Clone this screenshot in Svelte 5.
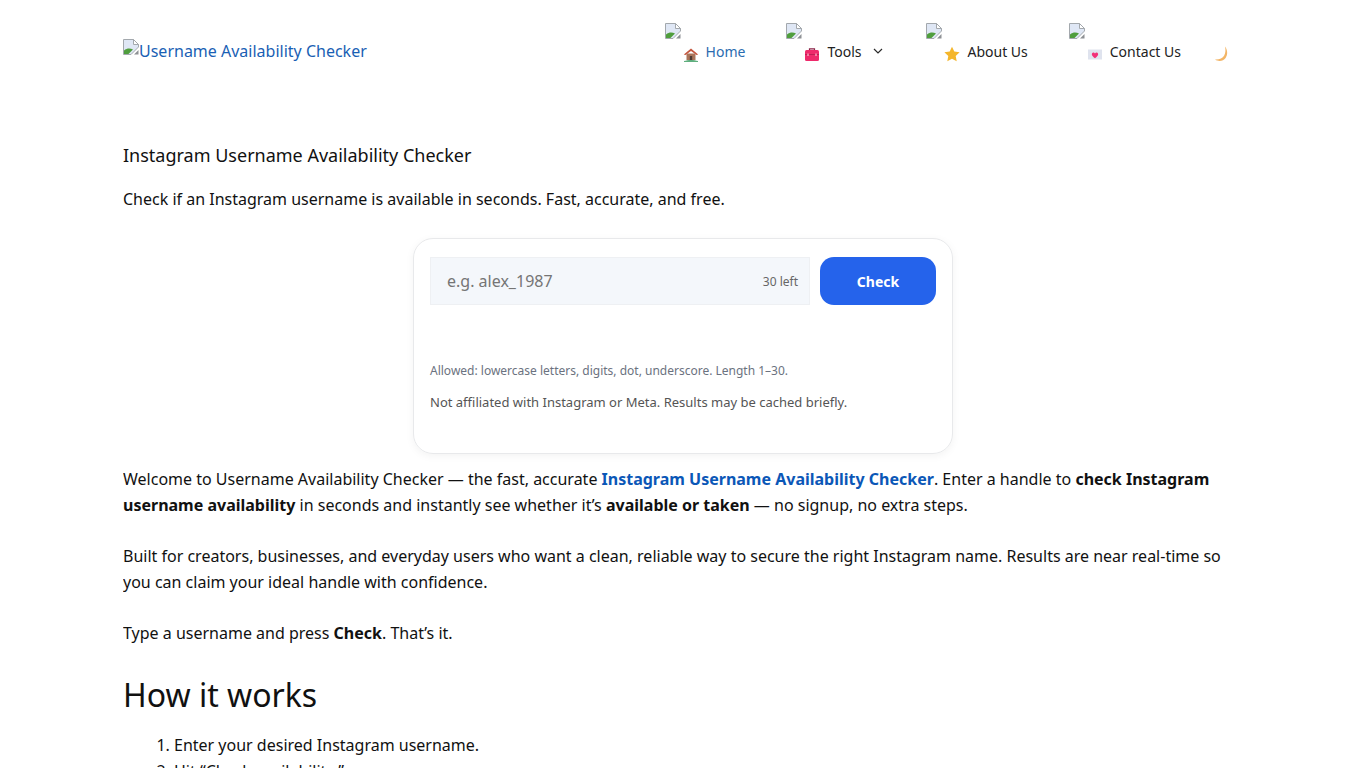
<script>
  const navItems = [
    { label: "Home", icon: "house", active: true },
    { label: "Tools", icon: "toolbox", caret: true },
    { label: "About Us", icon: "star" },
    { label: "Contact Us", icon: "letter" }
  ];
  const steps = ["Enter your desired Instagram username.", "Hit “Check availability.”", "See the result right away."];
</script>

{#snippet broken()}
  <svg class="broken" viewBox="0 0 16 16" width="16" height="16" aria-hidden="true">
    <path d="M0.5 0.5H10.5L15.5 5.5V8L8 15.5H0.5Z" fill="#dfe7f5" stroke="#a3a8ad" />
    <path d="M10.5 0.5V5.5H15.5Z" fill="#fff" stroke="#a3a8ad" />
    <path d="M1 15V11.5C4 9 7 9 10 10.5L5.5 15Z" fill="#4f9e3d" />
    <path d="M11 15.5H15.5V11Z" fill="#8d9094" />
  </svg>
{/snippet}

{#snippet emoji(name)}
  <svg class="emoji" viewBox="0 0 16 16" width="16" height="16" aria-hidden="true">
    {#if name === "house"}
      <path d="M1 15C5 13.5 11 13.5 15 15V16H1Z" fill="#5fae7e" />
      <path d="M3.5 7.5H12.5V14H3.5Z" fill="#a9745a" />
      <path d="M0.8 8.5L8 2.5L15.2 8.5L13.5 9L8 5L2.5 9Z" fill="#c4573f" />
      <path d="M6.8 10H9.2V14H6.8Z" fill="#4c3a33" />
    {:else if name === "toolbox"}
      <path d="M5.5 4.5V2.8H10.5V4.5" fill="none" stroke="#8c2348" stroke-width="1.2" />
      <rect x="1" y="4" width="14" height="11" rx="1.5" fill="#ee2a6b" />
      <path d="M1 8.5H15" stroke="#c01f55" />
      <path d="M4 7.5V10M12 7.5V10" stroke="#f8a8c0" stroke-width="1.4" />
    {:else if name === "star"}
      <path d="M8 .8L10.3 5.6L15.6 6.3L11.7 10L12.7 15.2L8 12.7L3.3 15.2L4.3 10L.4 6.3L5.7 5.6Z" fill="#f4b62c" />
    {:else if name === "letter"}
      <rect x="1" y="3.5" width="14" height="10" fill="#dfe3ee" />
      <path d="M8 12.2C5 10 4.6 8.8 5 7.5C5.5 6.2 7.4 6.2 8 7.6C8.6 6.2 10.5 6.2 11 7.5C11.4 8.8 11 10 8 12.2Z" fill="#f22f78" />
    {:else}
      <path d="M11 .6C13.6 4 14 8.6 11.6 12C9.2 15.4 4.6 16 1 13.6C5.4 13.8 8.6 12.6 10.2 9.6C11.6 7 11.8 3.8 11 .6Z" fill="#f3b566" />
    {/if}
  </svg>
{/snippet}

<div class="page">
  <header class="site-header">
    <a class="logo" href="#top">{@render broken()}<span>Username Availability Checker</span></a>
    <nav class="main-nav">
      {#each navItems as item (item.label)}
        <a class="nav-item" class:active={item.active} class:tools={item.caret} href="#top">
          {@render broken()}
          <span class="nav-row">
            {@render emoji(item.icon)}
            <span>{item.label}</span>
            {#if item.caret}
              <svg class="caret" viewBox="0 0 10 6" width="10" height="6" aria-hidden="true">
                <path d="M1 1L5 5L9 1" fill="none" stroke="#2a2a2a" stroke-width="1.2" />
              </svg>
            {/if}
          </span>
        </a>
      {/each}
      <span class="moon">{@render emoji("moon")}</span>
    </nav>
  </header>

  <main class="content">
    <h1>Instagram Username Availability Checker</h1>
    <p class="lead">Check if an Instagram username is available in seconds. Fast, accurate, and free.</p>

    <section class="checker">
      <div class="field-row">
        <label class="field">
          <input type="text" placeholder="e.g. alex_1987" />
          <span class="count">30 left</span>
        </label>
        <button type="button">Check</button>
      </div>
      <p class="allowed">Allowed: lowercase letters, digits, dot, underscore. Length 1–30.</p>
      <p class="note">Not affiliated with Instagram or Meta. Results may be cached briefly.</p>
    </section>

    <p class="copy">Welcome to Username Availability Checker — the fast, accurate <a href="#top">Instagram Username Availability Checker</a>. Enter a handle to <strong>check Instagram username availability</strong> in seconds and instantly see whether it’s <strong>available or taken</strong> — no signup, no extra steps.</p>
    <p class="copy">Built for creators, businesses, and everyday users who want a clean, reliable way to secure the right Instagram name. Results are near real-time so you can claim your ideal handle with confidence.</p>
    <p class="copy">Type a username and press <strong>Check</strong>. That’s it.</p>

    <h2>How it works</h2>
    <ol>
      {#each steps as step (step)}
        <li>{step}</li>
      {/each}
    </ol>
  </main>
</div>

<style>
  :global(body) {
    background: #fff;
    color: #111;
    font-family: "Noto Sans", "Open Sans", sans-serif;
    font-size: 16px;
    overflow: hidden;
  }

  .page {
    width: 1120px;
    margin-left: 123px;
    height: 768px;
    overflow: hidden;
  }

  .site-header {
    display: flex;
    justify-content: space-between;
    align-items: flex-start;
    height: 143px;
  }

  .logo {
    display: flex;
    align-items: flex-start;
    margin-top: 39px;
    color: #1a5fb4;
    text-decoration: none;
    line-height: 24px;
  }

  .main-nav {
    display: flex;
    gap: 41px;
    padding-top: 23px;
    padding-right: 13px;
    font-size: 14px;
  }

  .nav-item {
    display: flex;
    flex-direction: column;
    color: #222;
    text-decoration: none;
  }

  .nav-item.active {
    color: #2a6cb0;
  }

  .nav-item.tools {
    margin-right: 2px;
  }

  .nav-row {
    display: flex;
    align-items: center;
    gap: 7px;
    margin-top: 2px;
    margin-left: 18px;
    height: 20px;
  }

  .caret {
    margin-left: 5px;
  }

  .broken {
    display: block;
    flex: none;
  }

  .emoji {
    flex: none;
    margin-top: 5px;
  }

  .moon {
    margin-left: -8px;
    padding-top: 18px;
  }

  h1 {
    margin: 0;
    font-size: 18px;
    font-weight: 400;
    line-height: 25px;
  }

  .lead {
    margin: 19px 0 0;
    line-height: 25px;
  }

  .checker {
    box-sizing: border-box;
    width: 540px;
    height: 216px;
    margin: 26px auto 0;
    padding: 18px 16px;
    border: 1px solid #e8e9eb;
    border-radius: 20px;
    box-shadow: 0 2px 8px rgba(0, 0, 0, 0.05);
  }

  .field-row {
    display: flex;
    gap: 10px;
  }

  .field {
    position: relative;
    flex: 1;
    display: block;
  }

  input {
    box-sizing: border-box;
    display: block;
    width: 100%;
    height: 48px;
    padding: 0 70px 0 16px;
    border: 1px solid #eef0f3;
    background: #f4f7fb;
    font: inherit;
    color: #111;
    outline: none;
  }

  input::placeholder {
    color: #757575;
    opacity: 1;
  }

  .count {
    position: absolute;
    right: 12px;
    top: 16px;
    font-size: 12px;
    line-height: 17px;
    color: #666;
  }

  button {
    width: 116px;
    height: 48px;
    border: 0;
    border-radius: 14px;
    background: #2563eb;
    color: #fff;
    font: inherit;
    font-size: 14px;
    font-weight: 700;
  }

  .allowed {
    margin: 57px 0 0;
    font-size: 12px;
    line-height: 17px;
    color: #6b7280;
  }

  .note {
    margin: 14px 0 0;
    font-size: 13px;
    line-height: 18px;
    color: #555;
  }

  .copy {
    margin: 13px 0 26px;
    line-height: 25.6px;
  }

  .copy + .copy {
    margin-top: 0;
  }

  .copy a {
    color: #0b57b7;
    font-weight: 700;
    text-decoration: none;
  }

  h2 {
    margin: 0;
    font-size: 32px;
    font-weight: 400;
    line-height: 44px;
  }

  ol {
    margin: 16px 0 0;
    padding-left: 51px;
    line-height: 25.6px;
  }
</style>
